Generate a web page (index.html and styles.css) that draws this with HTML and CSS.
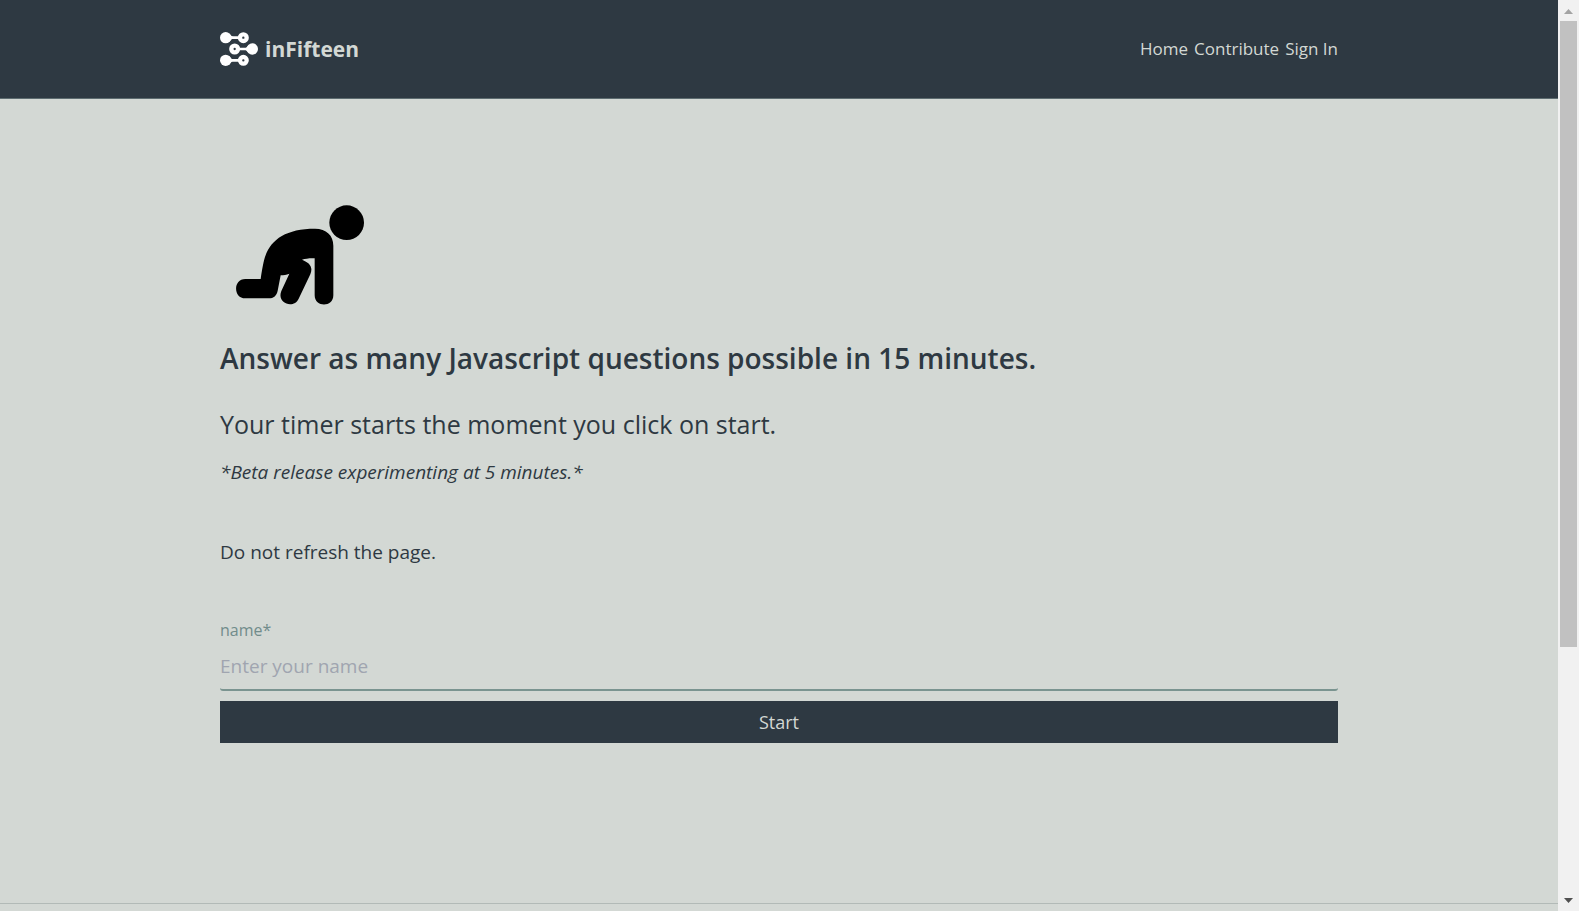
FILE: index.html
```html
<!DOCTYPE html>
<html lang="en">
<head>
<meta charset="utf-8">
<title>inFifteen</title>
<link rel="stylesheet" href="styles.css">
</head>
<body>
<div class="page">
  <header class="header">
    <div class="container header-row">
      <a class="brand" href="#">
        <svg class="brand-logo" viewBox="0 0 114 102" aria-hidden="true">
          <g stroke="#fff" stroke-width="8"><path d="M17 17h53M44 51h53M17 85h53"/></g>
          <g fill="#fff"><path d="M28 4Q36 17 48 17Q36 17 28 30ZM86 38Q78 51 66 51Q78 51 86 64ZM28 72Q36 85 48 85Q36 85 28 98Z"/><circle cx="17" cy="17" r="17"/><circle cx="97" cy="51" r="17"/><circle cx="17" cy="85" r="17"/></g>
          <g fill="#2e3942" stroke="#fff" stroke-width="13"><circle cx="70" cy="17" r="10"/><circle cx="44" cy="51" r="10"/><circle cx="70" cy="85" r="10"/></g>
        </svg>
        <span>inFifteen</span>
      </a>
      <nav class="nav">
        <a href="#">Home</a>
        <a href="#">Contribute</a>
        <a href="#">Sign In</a>
      </nav>
    </div>
  </header>
  <main class="main">
    <div class="container">
      <svg class="baby" viewBox="0 0 480 390" aria-hidden="true">
        <circle cx="380" cy="98" r="52"/>
        <path d="M76 267H122C126 240 129 222 134 204C151 149 197 116 285 116C319 116 340 136 340 167V316C340 353 284 353 284 316V205C270 204 257 206 246 209C269 218 280 231 271 253L236 326C222 357 169 341 184 303L208 251C199 254 191 256 182 256L173 302C170 317 161 325 146 325H76C39 325 39 267 76 267Z"/>
      </svg>
      <h1 class="title">Answer as many Javascript questions possible in 15 minutes.</h1>
      <h2 class="subtitle">Your timer starts the moment you click on start.</h2>
      <p class="beta">*Beta release experimenting at 5 minutes.*</p>
      <p class="notice">Do not refresh the page.</p>
      <form class="form">
        <label class="label" for="name">name*</label>
        <input class="input" id="name" type="text" placeholder="Enter your name">
        <button class="start" type="button">Start</button>
      </form>
    </div>
  </main>
  <footer class="footer"></footer>
</div>
<div class="scrollbar" aria-hidden="true">
  <svg class="arrow" viewBox="0 0 21 21"><path fill="#a3a3a3" d="M6 14h9L10.500 9z"/></svg>
  <div class="track"><div class="thumb"></div></div>
  <svg class="arrow" viewBox="0 0 21 21"><path fill="#505050" d="M6 8h9L10.500 13z"/></svg>
</div>
</body>
</html>
```
FILE: styles.css
```css
* { box-sizing: border-box; }
body {
  margin: 0;
  height: 100vh;
  display: flex;
  overflow: hidden;
  background: #d3d8d4;
  color: #2e3942;
  font-family: "Open Sans", "Noto Sans", sans-serif;
  font-size: 18px;
}
h1, h2, p { margin: 0; }
a { color: inherit; text-decoration: none; }
.page {
  flex: 1;
  min-width: 0;
  display: flex;
  flex-direction: column;
}
.container {
  width: 100%;
  max-width: 1118px;
  margin: 0 auto;
}
.header {
  padding: 30px 0;
  background: #2e3942;
  color: #d3d8d4;
  border-bottom: 1px solid #5d6c70;
}
.header-row {
  display: flex;
  align-items: center;
  justify-content: space-between;
}
.brand {
  display: flex;
  align-items: center;
  gap: 7px;
  font-size: 21px;
  line-height: 38px;
  font-weight: 700;
}
.brand-logo { width: 38px; height: 34px; }
.nav { display: flex; gap: 6px; font-size: 17px; line-height: 26px; }
.main { flex: 1; padding-top: 91px; }
.baby { display: block; width: 160px; height: 130px; }
.title {
  margin-top: 16px;
  font-size: 28px;
  line-height: 44px;
  font-weight: 600;
}
.subtitle {
  margin-top: 26px;
  font-size: 25px;
  line-height: 36px;
  font-weight: 400;
}
.beta {
  margin-top: 16px;
  font-size: 19px;
  line-height: 28px;
  font-style: italic;
}
.notice {
  margin-top: 52px;
  font-size: 19px;
  line-height: 28px;
}
.form { display: flex; flex-direction: column; margin-top: 51px; }
.label { font-size: 16px; line-height: 26px; color: #718c8b; }
.input {
  height: 48px;
  padding: 0;
  border: 0;
  border-bottom: 2px solid #7a9490;
  border-radius: 3px;
  outline: 0;
  background: transparent;
  color: inherit;
  font: inherit;
  font-size: 19px;
}
.input::placeholder { color: #a0a5b0; opacity: 1; }
.start {
  height: 42px;
  margin-top: 10px;
  padding: 0;
  border: 0;
  background: #2e3942;
  color: #d3d8d4;
  font: inherit;
}
.footer { height: 8px; border-top: 1px solid #b2bab7; }
.scrollbar {
  width: 21px;
  display: flex;
  flex-direction: column;
  background: #f1f1f1;
}
.arrow { width: 21px; height: 21px; }
.track { flex: 1; padding: 0 2px; }
.thumb { height: 72%; background: #c1c1c1; }
```
